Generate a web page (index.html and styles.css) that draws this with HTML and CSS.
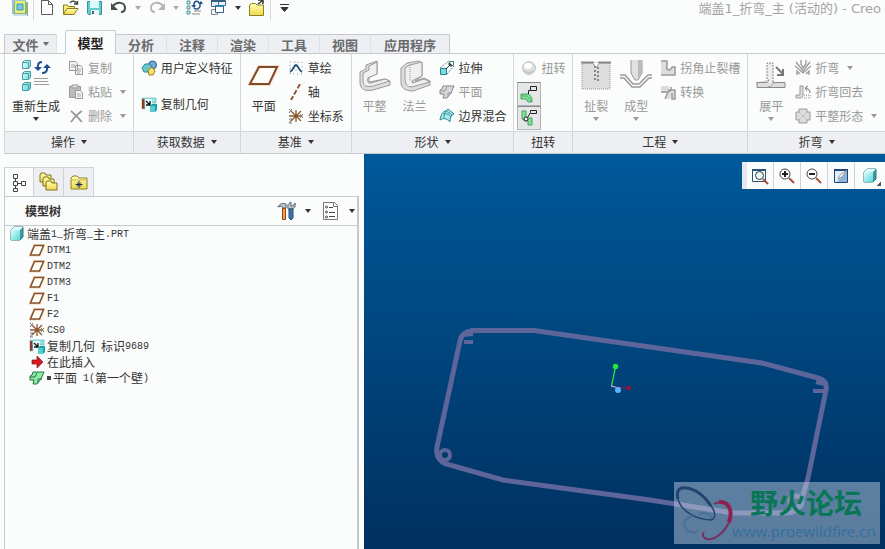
FILE: index.html
```html
<!DOCTYPE html>
<html lang="zh-CN">
<head>
<meta charset="utf-8">
<title>端盖1_折弯_主 (活动的) - Creo</title>
<link rel="stylesheet" href="styles.css">
</head>
<body>
<svg class="sprite" aria-hidden="true">
  <defs>
    <linearGradient id="cyan" x1="0" y1="0" x2="1" y2="1"><stop offset="0" stop-color="#e2ffff"/><stop offset="1" stop-color="#55d5d8"/></linearGradient>
    <linearGradient id="yellow" x1="0" y1="0" x2="0" y2="1"><stop offset="0" stop-color="#ffffb4"/><stop offset="1" stop-color="#f0d84a"/></linearGradient>
  </defs>
  <symbol id="caret" viewBox="0 0 6 4"><path d="M0 0h6L3 4z" fill="currentColor"/></symbol>
  <symbol id="plane" viewBox="0 0 16 16"><path d="M5.500 3.500h9L10.500 13h-9z" fill="#fffdf6" stroke="#f4d9b4" stroke-width="3"/><path d="M5.500 3.500h9L10.500 13h-9z" fill="#fffefa" stroke="#85502c" stroke-width="1.500"/></symbol>
  <symbol id="csys" viewBox="0 0 16 16"><path d="M8 2v12M1 8h13M3 3l10 10M13 3L3 13" stroke="#8b572b" stroke-width="1.300"/><path d="M1 1l3 3M4 1L1 5M12 6l3 4M15 6l-3 4M1 11h3l-3 4h3" stroke="#777" fill="none"/></symbol>
  <symbol id="copygeom" viewBox="0 0 16 16"><path d="M1 2h14v5H4v6H1z" fill="#8ce8e8" stroke="#5aa9ad" stroke-width=".6"/><path d="M1 3v10l2.500-1V3z" fill="#8c3a2c"/><path d="M4 3h7v8H4z" fill="#e9ffff"/><path d="M5 5l4 4M9 5v4H5" stroke="#111" stroke-width="1.300" fill="none"/><path d="M9 10l2-2h5v6l-2 2H9z" fill="#16a0a5"/><path d="M9 10h5v6H9z" fill="#54cfd1"/></symbol>
  <symbol id="cube" viewBox="0 0 16 16"><path d="M2 4l3-3h9v10l-3 3H2z" fill="#3d9ba3" stroke="#297981"/><path d="M2 4l3-3h9l-3 3z" fill="#dcffff"/><path d="M2 4h9v10H2z" fill="url(#cyan)"/></symbol>
  <symbol id="folder" viewBox="0 0 18 16"><path d="M1 4l2-2h4l2 2h8v11H1z" fill="url(#yellow)" stroke="#918020"/><path d="M1 6h16" stroke="#c6b44b"/></symbol>
</svg>

<header class="titlebar">
  <div class="quick">
    <span class="quick-item"><svg width="18" height="18" viewBox="0 0 18 18"><path d="M1 0h14v14H1z" fill="#9bc1d8"/><path d="M3 2h14v14H3z" fill="#8db183"/><path d="M4 1h10v12H4z" fill="#e4f26c"/><path d="M6 4h6v6H6z" fill="#6fcae6" stroke="#4d93aa"/><path d="M2 15h14" stroke="#c8e1ec" stroke-width="2"/></svg></span>
    <span class="divider"></span>
    <button class="quick-item" aria-label="新建"><svg width="18" height="18" viewBox="0 0 18 18"><path d="M3.500 .500h7l4 4v10h-11z" fill="#fff" stroke="#5c5c5c"/><path d="M10.500 .500v4h4" fill="none" stroke="#5c5c5c"/></svg></button>
    <button class="quick-item" aria-label="打开"><svg width="18" height="18" viewBox="0 0 18 18"><path d="M1.500 14V5h4l1 1.500h6V9" fill="#f7ec7a" stroke="#8d7b22"/><path d="M1.500 14.500l3.500-6h11l-4 6z" fill="url(#yellow)" stroke="#8d7b22"/><path d="M8 3c2-3 6-2 7 1m-3 0h3.500V1" fill="none" stroke="#444" stroke-width="1.300"/></svg></button>
    <button class="quick-item" aria-label="保存"><svg width="18" height="18" viewBox="0 0 18 18"><path d="M1.500 1.500h14v13h-13l-1-1z" fill="#62cbd2" stroke="#3e8d98"/><path d="M4 1h9v7H4z" fill="#d9fbfb"/><path d="M5 10h8v5H5z" fill="#eef4f4"/><path d="M6 11h2v3H6z" fill="#356d77"/></svg></button>
    <button class="quick-item" aria-label="撤消"><svg width="18" height="18" viewBox="0 0 18 18"><path d="M3 6c4-5 12-4 12 2 0 3-2 4-4 4" fill="none" stroke="#484a4d" stroke-width="2"/><path d="M1 3v7h7z" fill="#484a4d"/></svg></button>
    <button class="quick-caret muted" aria-label="撤消列表"><svg class="caret"><use href="#caret"/></svg></button>
    <button class="quick-item" aria-label="重做"><svg width="18" height="18" viewBox="0 0 18 18"><path d="M15 6C11 1 3 2 3 8c0 3 2 4 4 4" fill="none" stroke="#b5b5b5" stroke-width="2"/><path d="M17 3v7h-7z" fill="#b5b5b5"/></svg></button>
    <button class="quick-caret muted" aria-label="重做列表"><svg class="caret"><use href="#caret"/></svg></button>
    <button class="quick-item" aria-label="重新生成"><svg width="18" height="18" viewBox="0 0 18 18"><path d="M1 1h3v3H1zM1 6h3v3H1zM1 11h3v3H1z" fill="#b6eeee" stroke="#589499"/><path d="M8 11h7M6 14h8" stroke="#888"/><path d="M8 6V4c0-3 4-4 5-1M14 3v3c0 3-4 4-6 2" fill="none" stroke="#1d4f91" stroke-width="1.500"/><path d="M5 5h5L8 8zM12 4h5l-2-3z" fill="#1d4f91"/></svg></button>
    <button class="quick-item" aria-label="窗口"><svg width="18" height="18" viewBox="0 0 18 18"><path d="M1.500 1.500h7v5h-7zM8.500 .500h7v5h-7z" fill="#e5f1f7" stroke="#516878"/><path d="M1 1h7M8 1h7" stroke="#336087" stroke-width="2"/><path d="M1.500 9.500h6v5h-6z" fill="#f2f5f8" stroke="#7c8790"/><path d="M5.500 5.500h8v7h-8z" fill="#fff" stroke="#335d82"/><path d="M5 6h9" stroke="#2e7fb4" stroke-width="2"/></svg></button>
    <button class="quick-caret" aria-label="窗口列表"><svg class="caret"><use href="#caret"/></svg></button>
    <button class="quick-item" aria-label="关闭"><svg width="18" height="18" viewBox="0 0 18 18"><path d="M1.500 15.500V5l2-1.500h4L9 5h6.500v10.500z" fill="url(#yellow)" stroke="#8f7f20"/><path d="M10 4l4-3m-4-1h5v4" fill="none" stroke="#333" stroke-width="1.500"/></svg></button>
    <span class="divider"></span>
    <button class="quick-menu" aria-label="自定义快速访问工具栏"><svg width="9" height="8" viewBox="0 0 9 8"><path d="M0 .500h9M1 3.500h7l-3.500 4z" stroke="#333" fill="#333"/></svg></button>
  </div>
  <h1 class="title">端盖1_折弯_主 (活动的) - Creo</h1>
</header>

<nav class="tabs">
  <button class="tab tab-file">文件<svg class="caret"><use href="#caret"/></svg></button>
  <button class="tab tab-active">模型</button>
  <button class="tab">分析</button>
  <button class="tab">注释</button>
  <button class="tab">渲染</button>
  <button class="tab">工具</button>
  <button class="tab">视图</button>
  <button class="tab tab-last">应用程序</button>
</nav>

<section class="ribbon">
  <div class="group">
    <div class="group-body">
      <button class="big big-wide"><svg class="icon-lg" viewBox="0 0 32 32"><g fill="url(#cyan)" stroke="#4c9da3"><path d="M2.500 2.500l2-2h6v6l-2 2h-6zM2.500 13.500l2-2h6v6l-2 2h-6zM2.500 24.500l2-2h6v6l-2 2h-6z"/><path d="M2.500 2.500h6v6M2.500 13.500h6v6M2.500 24.500h6v6" fill="none"/></g><path d="M14 18.500h14M14 21.500h14M14 24.500h15" stroke="#9c9c9c"/><path d="M18 10V6c0-3 2-4 4-4M27 6v3c0 3-2 4-5 4" fill="none" stroke="#214e92" stroke-width="2"/><path d="M14 7h8l-4 4zM23 8h8l-4-4z" fill="#214e92"/></svg><span>重新生成</span><svg class="caret"><use href="#caret"/></svg></button>
      <div class="stack">
        <button class="cmd off"><svg class="icon" viewBox="0 0 16 16"><path d="M1.500 1.500h6l2 2v7h-8zM7.500 5.500h5l2 2v7h-7z" fill="#f3f3f3" stroke="#999"/><path d="M3 5h4M3 7h4M9 9h4M9 11h4M9 13h3" stroke="#aaa"/></svg>复制</button>
        <button class="cmd off"><svg class="icon" viewBox="0 0 16 16"><path d="M1.500 2.500h11v11h-11z" fill="#bbb" stroke="#999"/><path d="M4 1h6v3H4z" fill="#ddd" stroke="#999"/><path d="M7.500 6.500h5l2 2v6h-7z" fill="#f5f5f5" stroke="#999"/><path d="M9 10h4M9 12h4" stroke="#aaa"/></svg>粘贴<svg class="caret"><use href="#caret"/></svg></button>
        <button class="cmd off"><svg class="icon" viewBox="0 0 16 16"><path d="M3 3c3 2 7 7 11 11M14 3C9 6 6 10 3 14" fill="none" stroke="#999" stroke-width="1.700"/></svg>删除<svg class="caret"><use href="#caret"/></svg></button>
      </div>
    </div>
    <button class="group-name">操作<svg class="caret"><use href="#caret"/></svg></button>
  </div>

  <div class="group">
    <div class="group-body">
      <div class="stack stack-pair">
        <button class="cmd"><svg class="icon" viewBox="0 0 16 16"><circle cx="11.500" cy="5" r="4" fill="#74a9dc" stroke="#285d94"/><path d="M1 8l3-4h5l2 3-4 5H3z" fill="#66c9cc" stroke="#2a858c"/><path d="M7 10l4-3 3 4-2 4H8z" fill="#f5e26a" stroke="#997a20"/></svg>用户定义特征</button>
        <button class="cmd"><svg class="icon"><use href="#copygeom"/></svg>复制几何</button>
      </div>
    </div>
    <button class="group-name">获取数据<svg class="caret"><use href="#caret"/></svg></button>
  </div>

  <div class="group">
    <div class="group-body">
      <button class="big"><svg class="icon-lg" viewBox="0 0 32 32"><path d="M11 7h18l-8 17H2z" fill="#fffefa" stroke="#f5dfc4" stroke-width="4"/><path d="M11 7h18l-8 17H2z" fill="#fffefa" stroke="#81482b" stroke-width="2"/></svg><span>平面</span></button>
      <div class="stack">
        <button class="cmd"><svg class="icon" viewBox="0 0 16 16"><path d="M2 2h12v12H2zM2 8h12M8 2v12" fill="none" stroke="#999" stroke-dasharray="1 3"/><path d="M2 12c3-1 4-7 6-7s3 6 6 7" fill="none" stroke="#174d79" stroke-width="1.800"/></svg>草绘</button>
        <button class="cmd"><svg class="icon" viewBox="0 0 16 16"><path d="M12 0L3 16" stroke="#8b4a2b" stroke-width="1.800" stroke-dasharray="5 2"/></svg>轴</button>
        <button class="cmd"><svg class="icon"><use href="#csys"/></svg>坐标系</button>
      </div>
    </div>
    <button class="group-name">基准<svg class="caret"><use href="#caret"/></svg></button>
  </div>

  <div class="group">
    <div class="group-body">
      <button class="big off"><svg class="icon-lg" viewBox="0 0 32 32"><g fill="#ddd" stroke="#999" stroke-linejoin="round"><path d="M1 12l6-3V5l11-4v13l-8 3v5l16-3 5 2v4L14 30C7 32 1 29 1 23z"/><path d="M4 13l6-3V6l8-4v12l-9 4c-1 3 0 6 3 5l14-4 5 2-17 5C6 28 4 25 4 20z" fill="#f0f0f0"/></g></svg><span>平整</span></button>
      <button class="big off"><svg class="icon-lg" viewBox="0 0 32 32"><g fill="#ddd" stroke="#999" stroke-linejoin="round"><path d="M2 8l6-5 12-2 3 2v13l-7 5 9-3 6 3v4L14 31C6 31 2 28 2 22z"/><path d="M6 8l5-3 12-3v14l-10 5 1 2 11-4 6 3-18 5C7 27 6 23 6 18z" fill="#f0f0f0"/><path d="M11 5v15l3 3" fill="none" stroke-dasharray="1 1"/></g></svg><span>法兰</span></button>
      <div class="stack">
        <button class="cmd"><svg class="icon" viewBox="0 0 16 16"><path d="M1.500 8.500h6v6h-6z" fill="#72dfe2" stroke="#287d83"/><path d="M10.500 1.500h4v4h-4z" fill="#fff" stroke="#397b80"/><path d="M1 8l9-7M8 14l7-8" stroke="#579399" stroke-dasharray="2 1"/><path d="M7 9l5-5m-3 0h3v3" fill="none" stroke="#333"/></svg>拉伸</button>
        <button class="cmd off"><svg class="icon" viewBox="0 0 16 16"><path d="M4 2h11l-3 7-4 5H4l1-4H1V6l2-1z" fill="#d8d8d8" stroke="#888"/><path d="M1 7h5l2-4M9 13V9h4" fill="none" stroke="#999"/></svg>平面</button>
        <button class="cmd"><svg class="icon" viewBox="0 0 16 16"><path d="M1 12C2 6 4 3 7 3l2-2 6 5c-3 1-4 4-4 8C8 10 4 10 1 12z" fill="#a5ecf0" stroke="#30858d"/><path d="M4 6c4-1 7 1 8 3M7 3c2 1 4 2 6 4M7 3c-2 3-2 5-2 7" fill="none" stroke="#3b9199"/></svg>边界混合</button>
      </div>
    </div>
    <button class="group-name">形状<svg class="caret"><use href="#caret"/></svg></button>
  </div>

  <div class="group">
    <div class="group-body group-twist">
      <button class="cmd cmd-twist off"><svg class="icon" viewBox="0 0 16 16"><circle cx="8" cy="8" r="6.500" fill="#ddd" stroke="#c5c5c5"/><ellipse cx="7" cy="6" rx="4" ry="3" fill="#fff"/><path d="M3 11c3 2 7 2 10 0" fill="none" stroke="#bbb"/></svg>扭转</button>
      <button class="toggle" aria-label="显示折弯注释"><svg width="20" height="20" viewBox="0 0 20 20"><path d="M2 10h6c4 0 5 4 5 8H9l-2-3H2z" fill="#7ce393" stroke="#4c9f63"/><path d="M3 12h5l4 5" fill="none" stroke="#27854a" stroke-dasharray="1 1"/><path d="M9.500 10V6.500h2v-4h6v4h-6" fill="none" stroke="#222"/></svg></button>
      <button class="toggle" aria-label="显示止裂槽注释"><svg width="20" height="20" viewBox="0 0 20 20"><path d="M3 3h4v6l2 1h4v7H9v-4H6l-3-2z" fill="#7ce393" stroke="#4c9f63"/><circle cx="7" cy="11" r="2" fill="#fff" stroke="#222"/><path d="M8.500 9.500l3-5v-2h6v3h-6" fill="none" stroke="#222"/></svg></button>
    </div>
    <div class="group-name">扭转</div>
  </div>

  <div class="group">
    <div class="group-body">
      <button class="big off"><svg class="icon-lg" viewBox="0 0 32 32"><path d="M2 3h28v26H2z" fill="#ddd" stroke="#999" stroke-dasharray="1 1"/><path d="M1 2.500h12l3 4 3-4h12" fill="none" stroke="#888" stroke-width="2"/><path d="M13 3l3 4 3-4z" fill="#fff"/><path d="M15 6v16M18 7v16" stroke="#888" stroke-width="2" stroke-dasharray="2 2"/></svg><span>扯裂</span><svg class="caret"><use href="#caret"/></svg></button>
      <button class="big off"><svg class="icon-lg" viewBox="0 0 32 32"><path d="M11 0v13l4 7h3l4-7V0" fill="#e1e1e1" stroke="#999"/><path d="M18 0h4v13l-4 7z" fill="#bbb"/><path d="M0 15h5l8 9h6l9-9h4M0 18h4l8 9h8l9-9h3" fill="none" stroke="#999" stroke-width="1.500"/></svg><span>成型</span><svg class="caret"><use href="#caret"/></svg></button>
      <div class="stack">
        <button class="cmd off"><svg class="icon" viewBox="0 0 16 16"><path d="M1 1h6v5l3 4 2-3h3v8H1z" fill="#ddd"/><path d="M1 1h6v5c-2 4 3 6 5 1h3v8H1" fill="none" stroke="#999" stroke-width="1.500"/></svg>拐角止裂槽</button>
        <button class="cmd off"><svg class="icon" viewBox="0 0 16 16"><path d="M1 2h8v4h6v9h-3v-5l-2 5H6l2-6H1z" fill="#ddd"/><path d="M1 8h7l3-2V3M8 8l-3 7M8 6h7v9h-3v-6" fill="none" stroke="#999" stroke-width="1.500"/></svg>转换</button>
      </div>
    </div>
    <button class="group-name">工程<svg class="caret"><use href="#caret"/></svg></button>
  </div>

  <div class="group">
    <div class="group-body">
      <button class="big off"><svg class="icon-lg" viewBox="0 0 32 32"><path d="M12 22V3h6v19" fill="#eee" stroke="#888" stroke-dasharray="2 1"/><path d="M1.500 22.500h10c2 0 2-3 2-3M18 22.500h12v5h-28v-5M13 27c4-1 5-3 5-5" fill="#ddd" stroke="#888"/><path d="M21 7l7 7m0-5v6h-6" fill="none" stroke="#777" stroke-width="2"/></svg><span>展平</span><svg class="caret"><use href="#caret"/></svg></button>
      <div class="stack">
        <button class="cmd off"><svg class="icon" viewBox="0 0 16 16"><path d="M6 0v4l2 4 3-4V0M1 2l7 9 7-9M0 6l8 7 8-7M2 15v-4l3 3M14 15v-4l-3 3" fill="none" stroke="#999" stroke-width="1.300"/></svg>折弯<svg class="caret"><use href="#caret"/></svg></button>
        <button class="cmd off"><svg class="icon" viewBox="0 0 16 16"><path d="M5 2h3v9c0 2-1 3-3 3H1v-3h4z" fill="#ddd" stroke="#999"/><path d="M9 14h6v-3H9" fill="none" stroke="#999" stroke-dasharray="1 1"/><path d="M15 9c0-3-1-4-4-5m2-2l-3 2 2 3" fill="none" stroke="#777"/></svg>折弯回去</button>
        <button class="cmd off"><svg class="icon" viewBox="0 0 16 16"><path d="M4 1h8v3h3v8h-3v3H4v-3H1V4h3z" fill="#ddd" stroke="#999"/><path d="M4 4l8 8M12 4l-8 8" stroke="#aaa" stroke-dasharray="1 1"/></svg>平整形态<svg class="caret"><use href="#caret"/></svg></button>
      </div>
    </div>
    <button class="group-name">折弯<svg class="caret"><use href="#caret"/></svg></button>
  </div>
</section>

<main class="workspace">
  <aside class="navigator">
    <div class="nav-tabs">
      <button class="nav-tab nav-tab-active" aria-label="模型树"><svg width="16" height="20" viewBox="0 0 16 20"><path d="M2.500 1.500h4v4h-4zM2.500 8.500h4v4h-4zM2.500 15.500h4v3h-4zM10.500 8.500h4v4h-4zM4.500 5.500v3M4.500 12.500v3M6.500 10.500h4" fill="none" stroke="#444"/></svg></button>
      <button class="nav-tab" aria-label="文件夹浏览器"><svg width="20" height="20" viewBox="0 0 20 20"><g fill="url(#yellow)" stroke="#7d7222"><path d="M1 10V3l1-2h4l1 2h5v7z"/><path d="M4 14V7l1-2h4l1 2h5v7z"/><path d="M7 18v-7l1-2h4l1 2h5v7z"/></g></svg></button>
      <button class="nav-tab" aria-label="收藏夹"><svg width="18" height="16" viewBox="0 0 18 16"><use href="#folder"/><path d="M9 7v7M5.500 10.500h7M7 8.500l4 4M11 8.500l-4 4" stroke="#1b2f5c"/></svg></button>
    </div>
    <div class="panel">
      <div class="panel-head">
        <h2>模型树</h2>
        <button class="tool" aria-label="设置"><svg width="20" height="20" viewBox="0 0 20 20"><path d="M1 6c2-4 5-4 8-3v4H6L4 5z" fill="#bac9cf" stroke="#59666b"/><path d="M5.500 7.500h3v11h-3z" fill="#e1b03c" stroke="#9b3521"/><path d="M11 7c-1-3 1-5 3-6v4h2l2-3c1 4-1 5-2 6H11z" fill="#bac4ca" stroke="#5c6b75"/><path d="M12 8h4v9l-2 2-2-2z" fill="#3d76ae" stroke="#244a70"/></svg><svg class="caret"><use href="#caret"/></svg></button>
        <button class="tool" aria-label="显示"><svg width="20" height="20" viewBox="0 0 20 20"><path d="M2.500 1.500h11l3 3v14h-14z" fill="#fff" stroke="#777"/><path d="M12.500 1.500v4h4" fill="none" stroke="#777"/><circle cx="5.500" cy="6" r="1" fill="none" stroke="#444"/><circle cx="5.500" cy="11" r="1" fill="none" stroke="#444"/><circle cx="5.500" cy="16" r="1" fill="none" stroke="#444"/><path d="M8 6.500h4M8 11.500h6M8 15.500h6" stroke="#444"/></svg><svg class="caret"><use href="#caret"/></svg></button>
      </div>
      <ul class="tree">
        <li class="root"><svg class="icon"><use href="#cube"/></svg>端盖<i>1_</i>折弯<i>_</i>主<i>.PRT</i></li>
        <li><svg class="icon"><use href="#plane"/></svg><i>DTM1</i></li>
        <li><svg class="icon"><use href="#plane"/></svg><i>DTM2</i></li>
        <li><svg class="icon"><use href="#plane"/></svg><i>DTM3</i></li>
        <li><svg class="icon"><use href="#plane"/></svg><i>F1</i></li>
        <li><svg class="icon"><use href="#plane"/></svg><i>F2</i></li>
        <li><svg class="icon"><use href="#csys"/></svg><i>CS0</i></li>
        <li><svg class="icon"><use href="#copygeom"/></svg>复制几何<i> </i>标识<i>9689</i></li>
        <li><svg class="icon" viewBox="0 0 16 16"><path d="M3 6h5V2l6 6-6 6v-4H3z" fill="#db1721" stroke="#7a171c" stroke-width=".7"/></svg>在此插入</li>
        <li><svg class="icon" viewBox="0 0 16 16"><path d="M4 2h11l-3 7-4 5H4l1-4H1V6l2-1z" fill="#8beaa3" stroke="#237640"/><path d="M1 7h5l2-4M9 13V9h4" fill="none" stroke="#237640"/></svg><span class="mark"></span>平面<i> 1(</i>第一个壁<i>)</i></li>
      </ul>
    </div>
  </aside>

  <section class="viewport">
    <svg class="scene" viewBox="364 154 521 395" preserveAspectRatio="xMinYMin slice" aria-label="三维模型">
      <g fill="none" stroke="#5d659a" stroke-width="5">
        <path d="M470 330.500H534L650 347L762 363L818 378Q828 381 826 390L808 478L801 502Q798 512 788 513L733 513L650 500L503 480L446 464Q435 459 437 447L460 341Q462 331 474 331"/>
        <path d="M463 335l10-1M464 342h9M816 382l8 2M813 391h11" stroke-width="4"/>
        <circle cx="445" cy="455" r="5" stroke-width="4"/>
        <circle cx="796" cy="502" r="6" stroke-width="5"/>
      </g>
      <path d="M611.500 386l4-19" stroke="#28e050" stroke-width="1.300"/>
      <path d="M611 386l8 2" stroke="#d3c6ff"/><path d="M616 387l12 1" stroke="#8d1747"/>
      <circle cx="615.500" cy="366.500" r="2.700" fill="#1dec3b"/>
      <circle cx="629" cy="388" r="2.300" fill="#a30c35"/>
      <circle cx="618" cy="390" r="3" fill="#5cb5ff"/>
    </svg>
    <div class="view-tools">
      <button aria-label="重新调整"><svg width="18" height="18" viewBox="0 0 18 18"><path d="M1.500 2.500h13v12h-13z" fill="#fff" stroke="#285277"/><path d="M1 3h14" stroke="#285277" stroke-width="2"/><circle cx="8.500" cy="8.500" r="4" fill="#e6fafa" stroke="#333"/><path d="M12 12l5 5" stroke="#a64f3d" stroke-width="2"/></svg></button>
      <button aria-label="放大"><svg width="18" height="18" viewBox="0 0 18 18"><circle cx="7" cy="7" r="5" fill="#fff" stroke="#444"/><path d="M4 7h6M7 4v6" stroke="#222" stroke-width="2"/><path d="M11 11l5 5" stroke="#a64f3d" stroke-width="2"/></svg></button>
      <button aria-label="缩小"><svg width="18" height="18" viewBox="0 0 18 18"><circle cx="7" cy="7" r="5" fill="#fff" stroke="#444"/><path d="M4 7h6" stroke="#222" stroke-width="2"/><path d="M11 11l5 5" stroke="#a64f3d" stroke-width="2"/></svg></button>
      <button aria-label="重画"><svg width="18" height="18" viewBox="0 0 18 18"><path d="M2.500 2.500h13v13h-13z" fill="#dceffa" stroke="#24467c"/><path d="M15 3v12H5z" fill="#8fb6d8"/><path d="M2 3h14" stroke="#24467c" stroke-width="2"/><path d="M15 3l-5 7-4 2 2-4z" fill="#fff" stroke="#777" stroke-width=".7"/></svg></button>
      <button class="has-menu" aria-label="显示样式"><svg class="icon"><use href="#cube"/></svg></button>
    </div>
    <div class="watermark">
      <svg width="60" height="62" viewBox="0 0 60 62" fill="none"><path d="M36 38C41 38 42 32 39 27C33 16 21 6 11 5.500C3 5 2 12 5 20C9 30 22 37 36 38" stroke="#21456f" stroke-width="1.500"/><path d="M4 17C2 9 5 5 12 6C22 7 31 15 37 24" stroke="#21456f" stroke-width="3"/><path d="M19 34C10 36 8 43 13 48C16 51 21 51 24 49M25 32C31 30 36 32 38 37" stroke="#477195" stroke-width="2"/><path d="M40 22C49 17 57 23 57 34C55 46 42 59 33 57C29 56 28 53 30 50" stroke="#75305f" stroke-width="2"/><path d="M45 20C55 19 59 29 55 40" stroke="#912050" stroke-width="4"/></svg>
      <div class="watermark-text"><strong>野火论坛</strong><span>www.proewildfire.cn</span></div>
    </div>
  </section>
</main>
</body>
</html>
```

FILE: styles.css
```css
* { box-sizing: border-box; }

body {
  margin: 0;
  height: 100vh;
  display: flex;
  flex-direction: column;
  overflow: hidden;
  background: #fbfcfc;
  color: #333;
  font: 12px/16px "Noto Sans CJK SC", sans-serif;
}

button {
  margin: 0;
  padding: 0;
  border: 0;
  background: none;
  color: inherit;
  font: inherit;
  white-space: nowrap;
}

svg { display: block; flex: none; }
.sprite { position: absolute; width: 0; height: 0; }
.icon { width: 16px; height: 16px; }
.icon-lg { width: 32px; height: 32px; }
.caret { width: 6px; height: 4px; }

/* Title bar */
.titlebar {
  display: flex;
  justify-content: space-between;
  height: 30px;
  padding: 0 4px 0 8px;
}
.quick { display: flex; align-items: flex-start; }
.quick-item { display: flex; justify-content: center; width: 24px; }
.quick-caret { display: flex; justify-content: center; width: 14px; padding-top: 6px; }
.quick-menu { display: flex; justify-content: center; width: 24px; padding-top: 4px; }
.muted { color: #aaa; }
.divider { width: 1px; height: 20px; margin: 0 1px; background: #d4d6d8; }
.title {
  margin: 0;
  color: #a4a4a4;
  font: 13px/18px "DejaVu Sans", "Noto Sans CJK SC", sans-serif;
}

/* Ribbon tabs */
.tabs {
  display: flex;
  align-items: flex-end;
  height: 24px;
  padding-left: 4px;
  border-bottom: 1px solid #c6cacc;
}
.tab {
  min-width: 51px;
  height: 19px;
  border-top: 1px solid #c6cacc;
  border-right: 1px solid #dfe1e4;
  background: #eeeff2;
  color: #696b6d;
  font-size: 13px;
  font-weight: 700;
  line-height: 17px;
}
.tab-file {
  display: flex;
  align-items: center;
  justify-content: center;
  gap: 4px;
  width: 53px;
  margin-right: 8px;
  border-left: 1px solid #c6cacc;
}
.tab-active {
  height: 24px;
  margin-bottom: -1px;
  border: 1px solid #c6cacc;
  border-bottom: 0;
  border-radius: 2px 2px 0 0;
  background: #fbfcfc;
  color: #222;
  line-height: 24px;
}
.tab-last { padding: 0 13px; border-right-color: #c6cacc; }

/* Ribbon groups */
.ribbon {
  display: grid;
  grid-template-columns: 129fr 107fr 111fr 163fr 59fr 175fr 137fr;
  margin-left: 4px;
  border-bottom: 1px solid #c6cacc;
  border-left: 1px solid #d4d7da;
}
.group {
  display: flex;
  flex-direction: column;
  min-width: 0;
  border-right: 1px solid #d4d7da;
}
.group:last-child { border-right: 0; }
.group-body { display: flex; gap: 4px; height: 77px; padding: 2px 0 0 3px; }
.group-name {
  display: flex;
  align-items: center;
  justify-content: center;
  gap: 6px;
  height: 22px;
  padding-bottom: 2px;
  border-top: 1px solid #d4d7da;
  background: #eeeff2;
}
.big {
  display: flex;
  flex-direction: column;
  align-items: center;
  width: 40px;
  padding-top: 4px;
}
.big + .big { margin-left: -4px; }
.big-wide { width: 56px; }
.big span { margin: 6px 0 3px; }
.stack { display: flex; flex-direction: column; align-items: flex-start; }
.stack-pair { gap: 12px; padding-left: 4px; }
.cmd { display: flex; align-items: center; gap: 4px; height: 24px; }
.cmd .caret { margin-left: 4px; }
.off { color: #999; }
.group-twist { flex-direction: column; align-items: flex-start; gap: 0; }
.cmd-twist { padding-left: 4px; margin-bottom: 2px; }
.toggle {
  display: flex;
  align-items: center;
  justify-content: center;
  width: 24px;
  height: 24px;
  border: 1px solid #b0b2b5;
  border-top-color: #85878a;
  background: #e4e6e8;
}

/* Navigator */
.workspace { display: flex; flex: 1; min-height: 0; }
.navigator {
  display: flex;
  flex-direction: column;
  flex: 0 0 364px;
  padding: 13px 5px 0 4px;
}
.nav-tabs { display: flex; }
.nav-tab {
  display: flex;
  align-items: center;
  justify-content: center;
  width: 30px;
  height: 29px;
  border: 1px solid #d0d2d5;
  border-left: 0;
  border-bottom: 0;
  background: #eeeff2;
}
.nav-tab-active {
  height: 30px;
  margin-bottom: -1px;
  border-left: 1px solid #c6cacc;
  background: #fbfcfc;
}
.panel {
  flex: 1;
  border: 1px solid #c6cacc;
  border-right: 2px solid #c6cacc;
  border-bottom: 0;
}
.panel-head {
  display: flex;
  align-items: center;
  gap: 10px;
  height: 29px;
  padding: 0 2px 0 20px;
  border-bottom: 1px solid #c6cacc;
}
.panel-head h2 { flex: 1; margin: 0; font-size: 12px; font-weight: 700; }
.tool { display: flex; align-items: center; gap: 8px; }
.tree { margin: 0; padding: 0 0 0 24px; list-style: none; }
.tree li { display: flex; align-items: center; height: 16px; white-space: pre; }
.tree .icon { margin-right: 2px; }
.tree .root { margin-left: -20px; }
.tree i { height: 16px; font: 10px/18px "Liberation Mono", monospace; white-space: pre; }
.mark { width: 4px; height: 4px; margin-right: 2px; background: #444; }

/* Graphics area */
.viewport {
  position: relative;
  flex: 1;
  overflow: hidden;
  background: linear-gradient(#00599a, #00305f);
}
.scene { width: 100%; height: 100%; }
.view-tools {
  position: absolute;
  top: 8px;
  right: 0;
  display: flex;
  padding-left: 5px;
  background: #e4e8ec;
}
.view-tools button {
  display: flex;
  align-items: center;
  justify-content: center;
  width: 27px;
  height: 27px;
  border-right: 1px solid #cfd3d7;
  background: #fbfcfc;
}
.view-tools .has-menu {
  width: 30px;
  border-right: 0;
  background: linear-gradient(135deg, transparent 50%, #555 50%) right 4px bottom 3px / 4px 4px no-repeat #fbfcfc;
}
.watermark {
  position: absolute;
  right: 5px;
  bottom: 5px;
  display: flex;
  width: 206px;
  height: 62px;
  background: rgba(200, 214, 228, .46);
}
.watermark-text { display: flex; flex-direction: column; margin-left: -2px; }
.watermark-text strong {
  padding-left: 18px;
  color: #087657;
  font-size: 28px;
  font-weight: 700;
  line-height: 40px;
}
.watermark-text span {
  color: #35709f;
  font: 15px/18px "Noto Sans", sans-serif;
}
```
